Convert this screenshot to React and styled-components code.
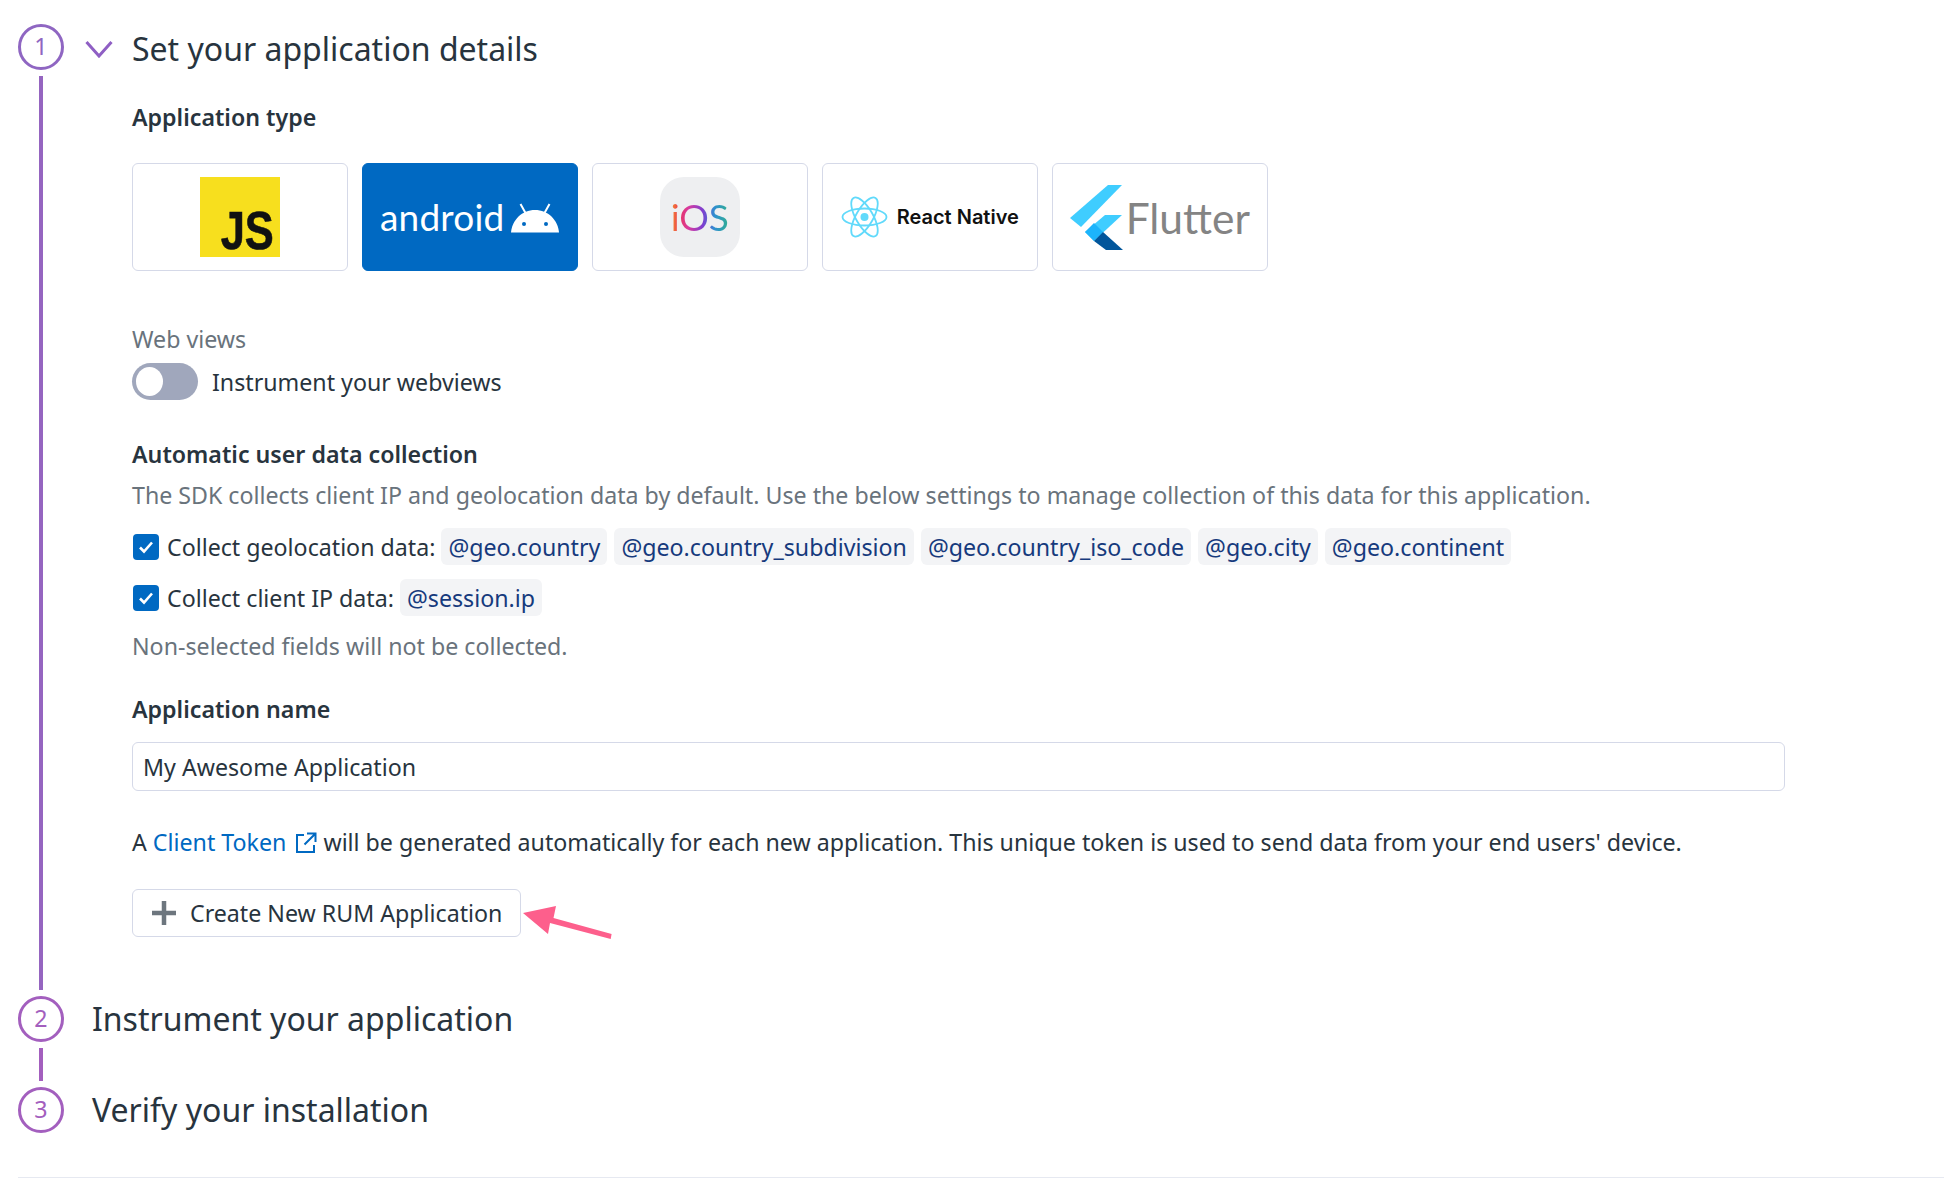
import React from "react";
import styled, { createGlobalStyle } from "styled-components";

const Global = createGlobalStyle`
  html, body { margin: 0; padding: 0; background: #fff; }
  body { font-family: "Noto Sans", "Open Sans", sans-serif; color: #28343e; font-size: 23.2px; line-height: 32px; }
  * { box-sizing: border-box; }
`;

const Page = styled.div`
  width: 1944px;
  height: 1178px;
  overflow: hidden;
  padding: 24px 0 0 18px;
`;
const Step = styled.section`
  display: flex;
  min-height: ${p => p.$min || 0}px;
`;
const Rail = styled.div`
  width: 46px;
  flex: none;
  display: flex;
  flex-direction: column;
  align-items: center;
  gap: 6px;
  padding-bottom: ${p => (p.$line ? 6 : 0)}px;
`;
const Circle = styled.div`
  width: 46px;
  height: 46px;
  flex: none;
  border-radius: 50%;
  border: 3px solid ${p => p.$c};
  color: ${p => p.$c};
  display: flex;
  align-items: center;
  justify-content: center;
  font-size: 23.2px;
  line-height: 1;
`;
const Line = styled.div`
  width: 4px;
  flex: 1;
  background: ${p => p.$c};
`;
const StepBody = styled.div`
  flex: 1;
  min-width: 0;
`;
const Details = styled(StepBody)`
  padding: 0 0 59px 0;
`;
const StepHead = styled.div`
  display: flex;
  align-items: center;
  height: ${p => p.$h || 46}px;
  padding-left: ${p => p.$pad}px;
`;
const Chevron = styled.svg`
  width: 28px;
  height: 18px;
  margin-right: 19px;
  margin-top: 2px;
  flex: none;
`;
const Title = styled.h2`
  margin: ${p => p.$mt || 0}px 0 0;
  font-size: 32px;
  line-height: 46px;
  font-weight: 400;
  color: #28343e;
`;
const Content = styled.div`
  padding-left: 68px;
`;
const Heading = styled.div`
  font-weight: 600;
  margin-top: ${p => p.$mt}px;
`;
const Cards = styled.div`
  display: flex;
  gap: 14.5px;
  margin-top: 30px;
`;
const Card = styled.div`
  width: 215.5px;
  height: 108px;
  border: 1.5px solid ${p => (p.$active ? "#0069c2" : "#d5d9e8")};
  border-radius: 6px;
  background: ${p => (p.$active ? "#0069c2" : "#fff")};
  display: flex;
  align-items: center;
  justify-content: center;
`;
const JsBadge = styled.div`
  width: 80px;
  height: 80px;
  background: #f7df1e;
  color: #111;
  display: flex;
  align-items: flex-end;
  justify-content: flex-end;
  padding: 0 6px 1px 0;
  font-family: "Liberation Sans", sans-serif;
  font-weight: 700;
  font-size: 53px;
  line-height: 50px;
`;
const JsLetters = styled.span`
  display: block;
  transform: scaleX(0.82);
  transform-origin: right center;
  -webkit-text-stroke: 0.6px #111;
`;
const AndroidWord = styled.span`
  color: #fff;
  font-family: "Lato", sans-serif;
  font-size: 37px;
  line-height: 40px;
  margin-right: 7px;
  letter-spacing: 0.2px;
`;
const IosTile = styled.div`
  width: 80px;
  height: 80px;
  border-radius: 24px;
  background: #eeeff1;
  display: flex;
  align-items: center;
  justify-content: center;
`;
const IosWord = styled.span`
  font-family: "Lato", sans-serif;
  font-weight: 400;
  font-size: 37px;
  line-height: 40px;
  background: linear-gradient(90deg, #f7941e 0%, #e8345f 14%, #d83aa0 30%, #7d3fd0 55%, #2f8fd0 75%, #30b090 100%);
  -webkit-background-clip: text;
  background-clip: text;
  color: transparent;
`;
const ReactWord = styled.span`
  font-family: "Inter", sans-serif;
  font-weight: 600;
  color: #111;
  font-size: 20px;
  margin-left: 9px;
  white-space: nowrap;
`;
const FlutterWord = styled.span`
  font-family: "Lato", sans-serif;
  color: #848484;
  font-size: 42.5px;
  line-height: 44px;
  margin-left: 3px;
  margin-top: 2px;
`;
const Muted = styled.div`
  color: #69737c;
  margin-top: ${p => p.$mt}px;
`;
const ToggleRow = styled.div`
  display: flex;
  align-items: center;
  gap: 14px;
  margin-top: 8px;
  height: 37px;
`;
const Toggle = styled.div`
  width: 66px;
  height: 37px;
  border-radius: 19px;
  background: #a0a7bc;
  padding: 4px;
  flex: none;
`;
const Knob = styled.div`
  width: 27px;
  height: 29px;
  border-radius: 50%;
  background: #fff;
`;
const CheckRow = styled.div`
  display: flex;
  align-items: center;
  height: 37px;
  margin-top: ${p => p.$mt}px;
`;
const Box = styled.div`
  width: 26px;
  height: 26px;
  margin-left: 1px;
  margin-right: 8px;
  border-radius: 4px;
  background: #0069c2;
  display: flex;
  align-items: center;
  justify-content: center;
  flex: none;
`;
const Chip = styled.code`
  font: inherit;
  color: #163a7d;
  background: #f3f4f6;
  border-radius: 6px;
  height: 37px;
  padding: 0 7px;
  display: inline-flex;
  align-items: center;
  margin-left: ${p => p.$ml}px;
`;
const Input = styled.input`
  display: block;
  width: 1653px;
  height: 49px;
  margin-top: 17px;
  border: 1.5px solid #d5d9e8;
  border-radius: 6px;
  padding: 0 10px;
  font: inherit;
  color: #28343e;
  background: #fff;
  outline: none;
`;
const Para = styled.p`
  margin: 35px 0 0;
`;
const TextLink = styled.a`
  color: #0069c2;
  text-decoration: none;
`;
const LinkIcon = styled.svg`
  width: 22px;
  height: 22px;
  vertical-align: -3px;
  margin-left: 9px;
`;
const ActionRow = styled.div`
  position: relative;
  margin-top: 31px;
  height: 48px;
`;
const Button = styled.button`
  width: 389px;
  height: 48px;
  border: 1.5px solid #d5d9e8;
  border-radius: 6px;
  background: #fff;
  font: inherit;
  color: #28343e;
  display: flex;
  align-items: center;
  padding: 0 0 0 19px;
  gap: 14px;
`;
const Arrow = styled.svg`
  position: absolute;
  left: 390px;
  top: 14px;
  width: 92px;
  height: 38px;
`;
const Divider = styled.hr`
  margin: 44px 0 0;
  border: 0;
  height: 2px;
  background: #e6e9f1;
`;

const Check = () => (
  <svg width="18" height="18" viewBox="0 0 18 18" fill="none">
    <path d="M3 9.5l4 4 8-9" stroke="#fff" strokeWidth="2.6" />
  </svg>
);

const AndroidHead = () => (
  <svg width="48" height="30" viewBox="0 0 48 30" style={{ flex: "none", marginTop: "2px" }}>
    <path d="M0 29.5C1 17 11 7 24 7s23 10 24 22.5z" fill="#fff" />
    <path d="M9.5 1l5 9M38.5 1l-5 9" stroke="#fff" strokeWidth="2" />
    <circle cx="13" cy="21" r="2" fill="#0069c2" />
    <circle cx="35" cy="21" r="2" fill="#0069c2" />
  </svg>
);

const Atom = () => (
  <svg width="47" height="42" viewBox="-23.5 -21 47 42" fill="none" stroke="#61dafb" strokeWidth="1.8" style={{ flex: "none" }}>
    <circle r="4" fill="#61dafb" stroke="none" />
    <ellipse rx="22" ry="8.5" />
    <ellipse rx="22" ry="8.5" transform="rotate(60)" />
    <ellipse rx="22" ry="8.5" transform="rotate(120)" />
  </svg>
);

const FlutterLogo = () => (
  <svg width="53" height="65" viewBox="0 0 53 65" style={{ flex: "none" }}>
    <polygon points="0,33 38,0 52,0 11,42" fill="#3fcdff" />
    <polygon points="52,30 35,30 15,47 24,56" fill="#3fcdff" />
    <polygon points="15,47 24,38 33,47 24,56" fill="#1cb4fb" />
    <polygon points="24,56 33,47 53,65 36,65" fill="#02569b" />
  </svg>
);

export default function App() {
  return (
    <>
      <Global />
      <Page>
        <Step>
          <Rail $line>
            <Circle $c="#8f66c2">1</Circle>
            <Line $c="#9565c0" />
          </Rail>
          <Details>
            <StepHead $pad={21} $h={47}>
              <Chevron viewBox="0 0 28 18" fill="none">
                <path d="M1.5 2L14 16 26.5 2" stroke="#8f5fc4" strokeWidth="3" />
              </Chevron>
              <Title $mt={3}>Set your application details</Title>
            </StepHead>
            <Content>
              <Heading $mt={30}>Application type</Heading>
              <Cards>
                <Card><JsBadge><JsLetters>JS</JsLetters></JsBadge></Card>
                <Card $active><AndroidWord>android</AndroidWord><AndroidHead /></Card>
                <Card><IosTile><IosWord>iOS</IosWord></IosTile></Card>
                <Card><Atom /><ReactWord>React Native</ReactWord></Card>
                <Card><FlutterLogo /><FlutterWord>Flutter</FlutterWord></Card>
              </Cards>
              <Muted $mt={52}>Web views</Muted>
              <ToggleRow>
                <Toggle><Knob /></Toggle>
                <span>Instrument your webviews</span>
              </ToggleRow>
              <Heading $mt={38}>Automatic user data collection</Heading>
              <Muted $mt={9}>The SDK collects client IP and geolocation data by default. Use the below settings to manage collection of this data for this application.</Muted>
              <CheckRow $mt={17}>
                <Box><Check /></Box>
                <span>Collect geolocation data:</span>
                <Chip $ml={6}>@geo.country</Chip>
                <Chip $ml={7}>@geo.country_subdivision</Chip>
                <Chip $ml={7}>@geo.country_iso_code</Chip>
                <Chip $ml={7}>@geo.city</Chip>
                <Chip $ml={7}>@geo.continent</Chip>
              </CheckRow>
              <CheckRow $mt={14}>
                <Box><Check /></Box>
                <span>Collect client IP data:</span>
                <Chip $ml={6}>@session.ip</Chip>
              </CheckRow>
              <Muted $mt={14}>Non-selected fields will not be collected.</Muted>
              <Heading $mt={31}>Application name</Heading>
              <Input readOnly value="My Awesome Application" />
              <Para>
                A <TextLink href="#">Client Token<LinkIcon viewBox="0 0 22 22" fill="none" stroke="#0069c2" strokeWidth="2"><path d="M9 3H2v17h17v-7" /><path d="M12 1.5h8.5V10M20 2L9.5 12.5" /></LinkIcon></TextLink> will be generated automatically for each new application. This unique token is used to send data from your end users' device.
              </Para>
              <ActionRow>
                <Button>
                  <svg width="24" height="24" viewBox="0 0 24 24" fill="none" stroke="#6d767e" strokeWidth="4.5" style={{ flex: "none" }}><path d="M12 0v24M0 12h24" /></svg>
                  Create New RUM Application
                </Button>
                <Arrow viewBox="0 0 92 38">
                  <path d="M1 10L34 3 31.5 15 89.6 31 88.7 36 28 20 26 31z" fill="#fd5f8c" />
                </Arrow>
              </ActionRow>
            </Content>
          </Details>
        </Step>
        <Step $min={91}>
          <Rail $line>
            <Circle $c="#a35fbe">2</Circle>
            <Line $c="#a35fbe" />
          </Rail>
          <StepBody>
            <StepHead $pad={28}><Title>Instrument your application</Title></StepHead>
          </StepBody>
        </Step>
        <Step>
          <Rail>
            <Circle $c="#a35fbe">3</Circle>
          </Rail>
          <StepBody>
            <StepHead $pad={28}><Title>Verify your installation</Title></StepHead>
          </StepBody>
        </Step>
        <Divider />
      </Page>
    </>
  );
}
